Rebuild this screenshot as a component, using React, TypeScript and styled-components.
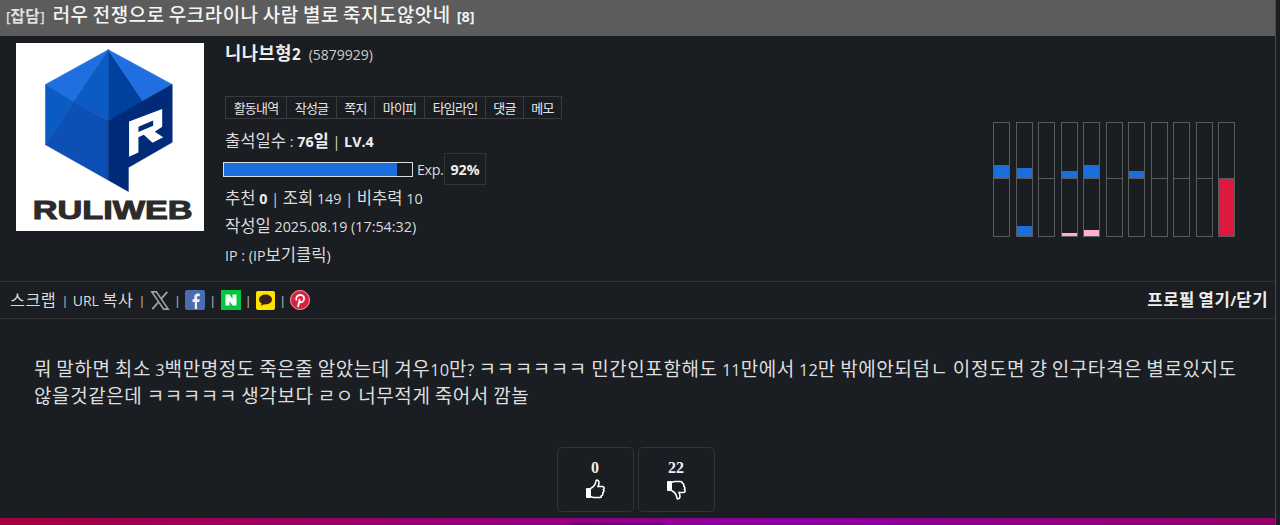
import React from "react";
import styled, { createGlobalStyle } from "styled-components";

const GlobalStyle = createGlobalStyle`
  html, body {
    margin: 0;
    padding: 0;
    height: 525px;
    overflow: hidden;
    background: #1a1d22;
  }
  * { box-sizing: border-box; }
`;

const Page = styled.div`
  width: 1276px;
  height: 525px;
  display: flex;
  flex-direction: column;
  background: #1a1d22;
  border-right: 1px solid #4a4a4a;
  color: #e6e6e6;
  font-family: "Open Sans", "Noto Sans CJK KR", sans-serif;
  font-size: 14.300px;
  overflow: hidden;
`;

const HangulRun = styled.span`
  font-family: "Noto Sans CJK KR", sans-serif;
  font-size: 1.160em;
  letter-spacing: 0.03em;
  line-height: 1;
`;

const LatinRun = styled.span`
  white-space: pre-wrap;
`;

// hangul is set larger than latin, the original font has wide hangul
function T({ children }: { children: string }) {
  const parts = children.split(/([가-힣ㄱ-ㅎㅏ-ㅣ]+)/).filter(Boolean);
  return (
    <>
      {parts.map((p, i) =>
        /[가-힣ㄱ-ㅎㅏ-ㅣ]/.test(p) ? <HangulRun key={i}>{p}</HangulRun> : <LatinRun key={i}>{p}</LatinRun>
      )}
    </>
  );
}

const TitleBar = styled.div`
  height: 36px;
  flex: none;
  display: flex;
  align-items: baseline;
  gap: 6px;
  padding: 5px 6px 0;
  background: #5c5c5c;
  color: #f2f2f2;
`;

const Category = styled.span`
  font-size: 13.500px;
  font-weight: 600;
  color: #e0e0e0;
`;

const TitleText = styled.span`
  margin-left: 2px;
  font-size: 16.300px;
  font-weight: 500;
  color: #f5f5f5;
`;

const ReplyCount = styled.span`
  font-size: 14.500px;
  font-weight: 700;
`;

const Profile = styled.div`
  height: 246px;
  flex: none;
  display: flex;
  padding: 7px 0 0 16px;
  border-bottom: 1px solid #333;
`;

const Avatar = styled.svg`
  width: 188px;
  height: 188px;
  flex: none;
  background: #fff;
`;

const Info = styled.div`
  margin-left: 21px;
  width: 400px;
  flex: none;
  display: flex;
  flex-direction: column;
  align-items: flex-start;
`;

const NameRow = styled.div`
  height: 28px;
  display: flex;
  align-items: baseline;
  gap: 8px;
  padding-top: 1px;
`;

const Nick = styled.span`
  font-size: 15.200px;
  font-weight: 700;
  color: #eee;
`;

const UserId = styled.span`
  font-size: 14px;
  color: #ccc;
`;

const ActionTable = styled.div`
  display: flex;
  margin-top: 25px;
  height: 23px;
  border: 1px solid #3a3a3a;
`;

const ActionCell = styled.span<{ $w: number }>`
  width: ${(p) => p.$w}px;
  display: flex;
  align-items: center;
  justify-content: center;
  font-family: "Noto Sans CJK KR", sans-serif;
  font-size: 13px;
  letter-spacing: -0.8px;
  color: #e6e6e6;
  & + & { border-left: 1px solid #3a3a3a; }
`;

const InfoLine = styled.div`
  line-height: 28.500px;
  height: 28.500px;
  color: #dcdcdc;
  white-space: pre;
  b { color: #eee; }
  ${HangulRun} { letter-spacing: 0; }
`;

const FirstLine = styled(InfoLine)`
  margin-top: 9px;
`;

const ExpRow = styled.div`
  height: 32px;
  display: flex;
  align-items: center;
  margin: -3.500px 0 -0.500px -2px;
`;

const ExpTrack = styled.div`
  width: 190px;
  height: 15px;
  border: 1px solid #ddd;
  background: #1a1d22;
`;

const ExpFill = styled.div`
  height: 100%;
  background: #1b6fdc;
`;

const ExpLabel = styled.span`
  margin-left: 4px;
  width: 27px;
  color: #dcdcdc;
  letter-spacing: -0.4px;
`;

const ExpValue = styled.span`
  width: 42px;
  height: 32px;
  display: flex;
  align-items: center;
  justify-content: center;
  border: 1px solid #333;
  font-weight: 700;
  color: #eee;
`;

const Chart = styled.div`
  margin-left: auto;
  margin-right: 40px;
  margin-top: 79px;
  height: 115px;
  display: flex;
  gap: 5.500px;
`;

const Gauge = styled.div`
  width: 17px;
  height: 115px;
  border: 1px solid #5a5a5a;
  display: flex;
  flex-direction: column;
`;

const GaugeTop = styled.div`
  height: 56px;
  border-bottom: 1px solid #5a5a5a;
  display: flex;
  flex-direction: column;
  justify-content: flex-end;
  flex: none;
`;

const GaugeBottom = styled.div`
  flex: 1;
  display: flex;
  flex-direction: column;
  justify-content: flex-end;
`;

const Bar = styled.div<{ $color: string; $h: number; $full?: boolean }>`
  height: ${(p) => (p.$full ? "100%" : `${p.$h}px`)};
  background: ${(p) => p.$color};
`;

const ShareBar = styled.div`
  height: 37px;
  flex: none;
  display: flex;
  align-items: center;
  gap: 6px;
  padding: 0 7px 0 10px;
  border-bottom: 1px solid #333;
  color: #dcdcdc;
  font-size: 14px;
`;

const ShareLink = styled.span`
  margin-right: 1px;
`;

const Sep = styled.span`
  font-family: "Liberation Sans", sans-serif;
  font-size: 13px;
  color: #aaa;
`;

const ProfileToggle = styled.span`
  margin-left: auto;
  font-size: 14.400px;
  font-weight: 700;
  color: #eee;
`;

const Body = styled.div`
  flex: none;
  height: 128px;
  padding: 37px 34px 0;
  font-size: 16.400px;
  line-height: 27px;
  word-break: keep-all;
  color: #dedede;
`;

const Votes = styled.div`
  display: flex;
  justify-content: center;
  gap: 4px;
  padding-right: 4px;
`;

const VoteBox = styled.div`
  width: 77px;
  height: 65px;
  border: 1px solid #333;
  border-radius: 5px;
  display: flex;
  flex-direction: column;
  align-items: center;
  padding-top: 12px;
`;

const VoteCount = styled.span`
  font-family: "Liberation Serif", serif;
  font-size: 16px;
  line-height: 16px;
  font-weight: 700;
  color: #f0f0f0;
`;

const Thumb = styled.svg`
  width: 20px;
  height: 21px;
  margin-top: 3px;
`;

const FooterStrip = styled.div`
  position: fixed;
  left: 0;
  width: 1275px;
  bottom: 0;
  height: 7px;
  background: linear-gradient(90deg, #a5003f 0%, #8c00a0 62%, #930068 100%);
  &::after {
    content: "";
    position: absolute;
    left: 572px;
    bottom: -1px;
    width: 92px;
    height: 3px;
    background: rgba(40, 0, 50, 0.35);
    filter: blur(1px);
  }
`;

const actions: [string, number][] = [
  ["활동내역", 60],
  ["작성글", 50],
  ["쪽지", 38],
  ["마이피", 50],
  ["타임라인", 61],
  ["댓글", 38],
  ["메모", 38],
];

const gauges = [
  { top: 13, bottom: 0 },
  { top: 10, bottom: 10 },
  { top: 0, bottom: 0 },
  { top: 7, bottom: 3 },
  { top: 13, bottom: 6 },
  { top: 0, bottom: 0 },
  { top: 7, bottom: 0 },
  { top: 0, bottom: 0 },
  { top: 0, bottom: 0 },
  { top: 0, bottom: 0 },
];

const logoFaces: [string, string][] = [
  ["326,28 138,132 222,183", "#1f6fe0"],
  ["326,28 222,183 326,240", "#0a5cc4"],
  ["326,28 326,240 430,183", "#00409f"],
  ["326,28 430,183 517,132", "#1f6fe0"],
  ["138,132 222,183 138,312", "#0a5cc4"],
  ["222,183 326,240 326,418 138,312", "#0c4fb5"],
  ["326,240 517,132 517,305 386,380 386,452 326,418", "#012a78"],
];

function Logo() {
  return (
    <Avatar viewBox="50 8 562 562">
      {logoFaces.map(([points, color]) => (
        <polygon key={points} points={points} fill={color} stroke={color} strokeWidth="1.500" />
      ))}
      <path
        d="M388 243L487 205V258L465 273L490 290L458 306L432 282L416 290V335L388 348Z M416 258L460 240V255L416 274Z"
        fill="#fff"
        fillRule="evenodd"
      />
      <text
        x="100"
        y="533"
        fontFamily="Liberation Sans, sans-serif"
        fontWeight="bold"
        fontSize="76"
        textLength="478"
        lengthAdjust="spacingAndGlyphs"
        fill="#2b2b2b"
        stroke="#2b2b2b"
        strokeWidth="3"
      >
        RULIWEB
      </text>
    </Avatar>
  );
}

const IconBox = styled.svg`
  flex: none;
  display: block;
`;

function XIcon() {
  return (
    <IconBox width="20" height="21" viewBox="0 0 22 22">
      <path d="M2 1.500h5l13 19h-5z" fill="none" stroke="#a0a0a0" strokeWidth="1.800" />
      <path d="M19 1.500L12.500 9M9.500 12.500L2.500 20.500" stroke="#a0a0a0" strokeWidth="2" />
    </IconBox>
  );
}

function FacebookIcon() {
  return (
    <IconBox width="20" height="20" viewBox="0 0 20 20">
      <rect width="20" height="20" rx="2" fill="#4a6db0" />
      <path d="M12 19v-7h2.300l.4-2.800H12V7.600c0-.9.300-1.400 1.400-1.400h1.400V3.700c-.4 0-1.200-.1-1.900-.1-2.200 0-3.600 1.300-3.600 3.700v1.900H7.500V12h2.300v7z" fill="#eef" />
    </IconBox>
  );
}

function NaverIcon() {
  return (
    <IconBox width="20" height="20" viewBox="0 0 20 20">
      <rect width="20" height="20" fill="#03c73c" />
      <path d="M4.500 4.500h4l3 4.500V4.500h4v11h-4l-3-4.500v4.500h-4z" fill="#fff" />
    </IconBox>
  );
}

function KakaoIcon() {
  return (
    <IconBox width="19" height="19" viewBox="0 0 19 19">
      <rect width="19" height="19" rx="2" fill="#fce300" />
      <ellipse cx="9.500" cy="8.500" rx="6.500" ry="5" fill="#3a1d1d" />
      <path d="M6 11l-1 4 4-2.500z" fill="#3a1d1d" />
    </IconBox>
  );
}

function PinterestIcon() {
  return (
    <IconBox width="20" height="20" viewBox="0 0 20 20">
      <circle cx="10" cy="10" r="10" fill="#d5233f" />
      <circle cx="10" cy="10" r="9.500" fill="none" stroke="#e89aa6" />
      <path d="M8 17l1.800-8M6.500 10.500c-1.200-3 1-5.500 3.800-5.500s4.200 2 3.700 4.400c-.5 2.600-3 3.600-4.600 2.100" fill="none" stroke="#fff" strokeWidth="1.800" />
    </IconBox>
  );
}

function ThumbUp() {
  return (
    <Thumb viewBox="0 0 20 21">
      <path d="M1.500 9.500h4v9h-4z" fill="#fff" stroke="#fff" strokeWidth="1" />
      <path
        d="M5.500 9.500c2-1 5-3.500 5.500-7.500 0-1.500 3-1 3 1.500 0 1.500-.5 3-1 4h4.500c2 0 2 2.500 1 3 .8 1.500 0 3-.7 3.300.3 1.500-.4 2.700-1.300 2.900 0 1-1 1.800-2 1.800H9c-1.500 0-2.500-.5-3.500-1"
        fill="none"
        stroke="#fff"
        strokeWidth="1.600"
      />
    </Thumb>
  );
}

function ThumbDown() {
  return (
    <Thumb viewBox="0 0 20 21">
      <path d="M1.500 2.500h4v9h-4z" fill="#fff" stroke="#fff" strokeWidth="1" />
      <path
        d="M5.500 11.500c2 1 5 3.500 5.500 7.500 0 1.500 3 1 3-1.500 0-1.500-.5-3-1-4h4.500c2 0 2-2.500 1-3 .8-1.500 0-3-.7-3.300.3-1.500-.4-2.700-1.300-2.900 0-1-1-1.800-2-1.800H9c-1.500 0-2.500.5-3.500 1"
        fill="none"
        stroke="#fff"
        strokeWidth="1.600"
      />
    </Thumb>
  );
}

export default function App() {
  return (
    <>
      <GlobalStyle />
      <Page>
        <TitleBar>
          <Category>
            <T>[잡담]</T>
          </Category>
          <TitleText>
            <T>러우 전쟁으로 우크라이나 사람 별로 죽지도않앗네</T>
          </TitleText>
          <ReplyCount>[8]</ReplyCount>
        </TitleBar>
        <Profile>
          <Logo />
          <Info>
            <NameRow>
              <Nick>
                <T>니나브형2</T>
              </Nick>
              <UserId>(5879929)</UserId>
            </NameRow>
            <ActionTable>
              {actions.map(([label, w]) => (
                <ActionCell key={label} $w={w}>
                  {label}
                </ActionCell>
              ))}
            </ActionTable>
            <FirstLine>
              <T>출석일수 : </T>
              <b>
                <T>76일</T>
              </b>
              <LatinRun> | </LatinRun>
              <b>LV.4</b>
            </FirstLine>
            <ExpRow>
              <ExpTrack>
                <ExpFill style={{ width: "92%" }} />
              </ExpTrack>
              <ExpLabel>Exp.</ExpLabel>
              <ExpValue>92%</ExpValue>
            </ExpRow>
            <InfoLine>
              <T>추천 </T>
              <b>0</b>
              <T> | 조회 149 | 비추력 10</T>
            </InfoLine>
            <InfoLine>
              <T>작성일 2025.08.19 (17:54:32)</T>
            </InfoLine>
            <InfoLine>
              <T>IP : (IP보기클릭)</T>
            </InfoLine>
          </Info>
          <Chart>
            {gauges.map((g, i) => (
              <Gauge key={i}>
                <GaugeTop>
                  <Bar $color="#1b6fdc" $h={g.top} />
                </GaugeTop>
                <GaugeBottom>
                  <Bar $color={i === 3 || i === 4 ? "#ffb0cb" : "#1b6fdc"} $h={g.bottom} />
                </GaugeBottom>
              </Gauge>
            ))}
            <Gauge>
              <GaugeTop />
              <GaugeBottom>
                <Bar $color="#dc1a40" $h={0} $full />
              </GaugeBottom>
            </Gauge>
          </Chart>
        </Profile>
        <ShareBar>
          <ShareLink>
            <T>스크랩</T>
          </ShareLink>
          <Sep>|</Sep>
          <ShareLink>
            <T>URL 복사</T>
          </ShareLink>
          <Sep>|</Sep>
          <XIcon />
          <Sep>|</Sep>
          <FacebookIcon />
          <Sep>|</Sep>
          <NaverIcon />
          <Sep>|</Sep>
          <KakaoIcon />
          <Sep>|</Sep>
          <PinterestIcon />
          <ProfileToggle>
            <T>프로필 열기/닫기</T>
          </ProfileToggle>
        </ShareBar>
        <Body>
          <T>뭐 말하면 최소 3백만명정도 죽은줄 알았는데 겨우10만? ㅋㅋㅋㅋㅋㅋ 민간인포함해도 11만에서 12만 밖에안되덤ㄴ 이정도면 걍 인구타격은 별로있지도 않을것같은데 ㅋㅋㅋㅋㅋ 생각보다 ㄹㅇ 너무적게 죽어서 깜놀</T>
        </Body>
        <Votes>
          <VoteBox>
            <VoteCount>0</VoteCount>
            <ThumbUp />
          </VoteBox>
          <VoteBox>
            <VoteCount>22</VoteCount>
            <ThumbDown />
          </VoteBox>
        </Votes>
        <FooterStrip />
      </Page>
    </>
  );
}
